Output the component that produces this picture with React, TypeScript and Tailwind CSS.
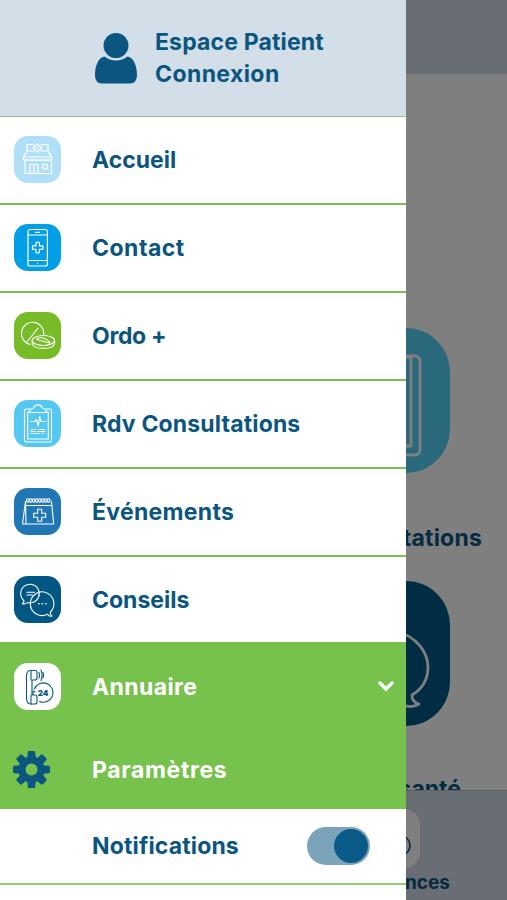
import { ReactNode, useState } from "react";

const stroke = {
	fill: "none",
	stroke: "currentColor",
	strokeLinecap: "round",
	strokeLinejoin: "round",
} as const;

const PharmacyIcon = () => (
	<svg viewBox="0 0 47 47" className="w-full h-full" {...stroke} strokeWidth="1.2">
		<path d="M13 15V8.5H19.500L20.500 10M27 10L28 8.5H34V15M13 15H20M27 15H34" />
		<path d="M23.500 7.500L25.500 10L28 12L25.500 14L23.500 16.500L21.500 14L19 12L21.500 10zM22.500 12h2M23.500 11v2" />
		<path d="M13 15L9.500 21H37.500L34 15" />
		<path d="M9.500 21v2.500q1.750 1.600 3.500 0q1.750 1.600 3.500 0q1.750 1.600 3.500 0q1.750 1.600 3.500 0q1.750 1.600 3.500 0q1.750 1.600 3.500 0q1.750 1.600 3.500 0q1.750 1.600 3.500 0V21" />
		<path d="M11 25V37.500H37.500V25" />
		<path d="M16 37V28.500H24V37M20 28.500V37M29 28.500h4.500v4.500h-4.500z" />
	</svg>
);

const PhoneIcon = () => (
	<svg viewBox="0 0 47 47" className="w-full h-full" {...stroke} strokeWidth="1.2">
		<rect x="14" y="5.500" width="19.400" height="36.500" rx="2" />
		<path d="M14 11H33M14 36.500H33M21.500 8.300h4M23.500 39.300h.2" />
		<path d="M22 18.600q1.700-.8 3.400 0v3.300h3.300q.8 1.700 0 3.400h-3.300v3.300q-1.700.8-3.400 0v-3.300h-3.300q-.8-1.700 0-3.400h3.300z" />
	</svg>
);

const PillsIcon = () => (
	<svg viewBox="0 0 47 47" className="w-full h-full" {...stroke} strokeWidth="1.100">
		<path d="M16.500 32.500A11.200 11.200 0 1 1 29.800 22.500" />
		<path d="M13.300 29.500L24 16.200" />
		<ellipse cx="29.400" cy="28.500" rx="11.200" ry="5" />
		<path d="M18.200 28.500v3c1 6.500 21.400 6.500 22.400 0v-3M22.500 27.500L35.500 31M23 26.500C26 25.300 31 25.300 36 30.500" />
	</svg>
);

const ClipboardIcon = () => (
	<svg viewBox="0 0 47 47" className="w-full h-full" {...stroke} strokeWidth="1.100">
		<path d="M16 9H12a1.500 1.500 0 0 0-1.500 1.500V40.500A1.500 1.500 0 0 0 12 42H36a1.500 1.500 0 0 0 1.500-1.500V10.500A1.500 1.500 0 0 0 36 9H32" />
		<path d="M16 12H13.700V39H34.300V12H32" />
		<path d="M16 12.500V10.500C16 8.500 19 9 20 7.500C21 4 27 4 28 7.500C29 9 32 8.500 32 10.500V12.500z" />
		<path d="M16.500 21.500H21L22.500 19.500L24.300 26L25.700 16.500L27 21.500H31.500" />
		<path d="M17 29.500h6M25 29.500h6M17 31.500h4M23 31.500h8M17 33.500h9M28 33.500h3" strokeDasharray="2 1" strokeWidth="1.100" />
	</svg>
);

const CalendarIcon = () => (
	<svg viewBox="0 0 47 47" className="w-full h-full" {...stroke} strokeWidth="1.100">
		<path d="M11.500 13.500L8.500 36H39.700L37.500 13.500M11.500 13.500L12 36M11.500 17.500H37.800" />
		{[13, 16, 19, 22, 25, 28, 31, 34].map((x) => (
			<ellipse key={x} cx={x + 0.8} cy="12.500" rx="1.300" ry="1.700" />
		))}
		<path d="M23.700 21.300h4v4h4v4h-4v4h-4v-4h-4v-4h4z" />
	</svg>
);

const ChatIcon = () => (
	<svg viewBox="0 0 47 47" className="w-full h-full" {...stroke} strokeWidth="1.100">
		<path d="M18.500 26.500A9.300 9.300 0 1 0 9.800 24.500C10.500 26 9.500 27 8.300 27.800C10.500 28.300 12.500 27.700 13.500 26.500C15 27 17 27 18.500 26.500" />
		<path d="M33.500 38.200A11.800 11.800 0 1 1 36.500 36C35.500 37.700 37 39 38 40C35.500 41 34.300 39.500 33.500 38.200z" />
		<path d="M13 16.300h7.500M13 19h5.500" />
		<path d="M24.700 27.800h.2M28.300 27.800h.2M31.900 27.800h.2" strokeWidth="1.600" />
	</svg>
);

const CallIcon = () => (
	<svg viewBox="0 0 47 47" className="w-full h-full" {...stroke} strokeWidth="1.100">
		<path d="M18 7.500H16C13.500 7.500 12.500 10.500 12.500 14V34C12.500 38 14 41 16.500 41H21a2 2 0 0 0 2-2V34a2 2 0 0 0-2-2H18V17H21a2 2 0 0 0 2-2V9.500a2 2 0 0 0-2-2z" />
		<path d="M17 7.500V17M17 32V41M25 9.500q1.300 2.500 0 5.500M27 7q2 5 0 10.500M29 9.500q1.200 2.500 0 5.500" />
		<path d="M20.300 26A9.700 9.700 0 1 1 25.500 38.500M19 29v2.500M19 28l2 1" />
		<text x="29" y="32.500" textAnchor="middle" fill="currentColor" stroke="none" className="font-['Inter'] font-black text-[8px]">24</text>
	</svg>
);

const UserIcon = () => (
	<svg viewBox="0 0 42 51" className="w-[42px] h-[51px]" fill="currentColor">
		<circle cx="21" cy="12.600" r="12.500" />
		<path d="M9.500 23.500C13 26.300 17 27.500 21 27.500S29 26.300 32.500 23.500C39 24.500 42 33.500 42 42C42 47 39.500 50.500 35 50.500H7C2.500 50.500 0 47 0 42C0 33.500 3 24.500 9.500 23.500z" />
	</svg>
);

const GearIcon = () => (
	<svg viewBox="-18.500 -18.500 37 37" className="w-[37px] h-[37px] mb-px" fill="currentColor">
		{[0, 45, 90, 135, 180, 225, 270, 315].map((a) => (
			<path key={a} transform={`rotate(${a})`} d="M-4.300-10L-3.700-17.500Q-3.500-18.500-2.500-18.500H2.500Q3.500-18.500 3.700-17.500L4.300-10z" />
		))}
		<path fillRule="evenodd" d="M-13.200 0a13.200 13.200 0 1 0 26.400 0a13.200 13.200 0 1 0-26.400 0M-6 0a6 6 0 1 0 12 0a6 6 0 1 0-12 0" />
	</svg>
);

interface MenuRowInput {
	label: string,
	tile: string,
	row: string,
	spacing: string,
	icon: ReactNode,
	children?: ReactNode,
}

function MenuRow({ label, tile, row, spacing, icon, children }: MenuRowInput) {
	return (
		<li className={`flex items-center pl-3.5 pr-3 ${row}`}>
			<div className={`w-[47px] h-[47px] rounded-[14px] shrink-0 ${tile}`}>{icon}</div>
			<span className={`ml-[31px] pt-px grow whitespace-nowrap ${spacing}`}>{label}</span>
			{children}
		</li>
	);
}

function HomePage() {
	return (
		<div className="h-full flex flex-col bg-white text-[#0b5680]">
			<header className="h-[74px] shrink-0 bg-[#d2dde8]" />
			<main className="grow min-h-0 overflow-hidden flex flex-col items-end pt-[254px]">
				<div className="w-[145px] h-[145px] mr-[57px] shrink-0 rounded-[44px] bg-[#56d2f8] text-white">
					<svg viewBox="0 0 145 145" className="w-full h-full" {...stroke} strokeWidth="2.800">
						<rect x="30" y="28" width="85" height="99" rx="5" />
						<path d="M38 29H106V118H38z" />
					</svg>
				</div>
				<p className="mt-[48px] mr-[25px] h-[34px] leading-[34px] tracking-[0.2px]">Rdv Consultations</p>
				<div className="mt-[26px] w-[145px] h-[145px] mr-[57px] shrink-0 rounded-[44px] bg-[#005b88] text-white">
					<svg viewBox="0 0 145 145" className="w-full h-full" {...stroke} strokeWidth="2.800">
						<path d="M90 50C112 55 123 72 123 86C123 99 117 108 107 114C107 119 110 122 114 123C108 127 101 126 94 123" />
					</svg>
				</div>
				<p className="mt-[46px] mr-[46px] shrink-0 leading-[34px]">Conseils santé</p>
			</main>
			<footer className="h-[110px] shrink-0 bg-[#d2dde8] border-t border-[#b6c0ca] flex flex-col items-end pt-[18px]">
				<div className="w-[59px] h-[59px] mr-[87px] rounded-2xl bg-white">
					<svg viewBox="0 0 59 59" className="w-full h-full" {...stroke} strokeWidth="1.500">
						<circle cx="39" cy="36.500" r="10" />
					</svg>
				</div>
				<p className="mt-px mr-[57px] text-[19px] leading-[28px]">Urgences</p>
			</footer>
		</div>
	);
}

export default function App() {
	const [notifications, setNotifications] = useState<boolean>(true);

	return (
		<div className="relative w-[507px] h-[900px] overflow-hidden font-['Inter',sans-serif] font-bold text-[23px]">
			<HomePage />
			<div className="absolute inset-0 bg-black/50" />

			<nav className="absolute inset-y-0 left-0 w-[406px] bg-white text-[#0b5680]">
				<div className="h-[117px] bg-[#d2dfe8] border-b border-[#8fca78] flex items-start pl-[95px]">
					<div className="mt-[33px]"><UserIcon /></div>
					<div className="ml-[18px] mt-[26px] leading-[32px]">
						<p className="tracking-[0.15px]">Espace Patient</p>
						<p className="tracking-[0.4px]">Connexion</p>
					</div>
				</div>

				<ul>
					<MenuRow label="Accueil" row="h-[88px] border-b-2 border-[#77c24d]" tile="mb-0.5 bg-[#b0e0f8] text-white" spacing="tracking-normal" icon={<PharmacyIcon />} />
					<MenuRow label="Contact" row="h-[88px] border-b-2 border-[#77c24d]" tile="mb-0.5 bg-[#039fe6] text-white" spacing="tracking-[0.5px]" icon={<PhoneIcon />} />
					<MenuRow label="Ordo +" row="h-[88px] border-b-2 border-[#77c24d]" tile="mb-0.5 bg-[#76bc26] text-white" spacing="tracking-[-0.3px]" icon={<PillsIcon />} />
					<MenuRow label="Rdv Consultations" row="h-[88px] border-b-2 border-[#77c24d]" tile="mb-0.5 bg-[#54c8f1] text-white" spacing="tracking-[0.15px]" icon={<ClipboardIcon />} />
					<MenuRow label="Événements" row="h-[88px] border-b-2 border-[#77c24d]" tile="mb-0.5 bg-[#2177b4] text-white" spacing="tracking-[0.3px]" icon={<CalendarIcon />} />
					<MenuRow label="Conseils" row="h-[85px]" tile="bg-[#005784] text-white" spacing="tracking-normal" icon={<ChatIcon />} />
					<MenuRow label="Annuaire" row="h-[89px] bg-[#77c24d] text-white" tile="bg-white text-[#0b5680]" spacing="tracking-[0.4px]" icon={<CallIcon />}>
						<svg viewBox="0 0 16 11" className="w-4 h-[11px]" fill="none" stroke="currentColor" strokeWidth="3.400" strokeLinecap="round">
							<path d="M2 2L8 8L14 2" />
						</svg>
					</MenuRow>
					<li className="h-[78px] bg-[#77c24d] flex items-center pl-[13px]">
						<GearIcon />
						<span className="ml-[42px] text-white tracking-[0.65px]">Paramètres</span>
					</li>
					<li className="h-[76px] border-b-2 border-[#8fce70] flex items-center justify-between pl-[92px] pr-[36px]">
						<span className="pt-px tracking-[0.15px]">Notifications</span>
						<button
							className={`w-[63px] h-[38px] rounded-full bg-[#7ba3ba] flex items-center px-0.5 ${notifications ? 'justify-end' : 'justify-start'}`}
							onClick={() => setNotifications(!notifications)}
						>
							<span className="w-[34px] h-[34px] rounded-full bg-[#0b5b88]" />
						</button>
					</li>
				</ul>
			</nav>
		</div>
	);
}
